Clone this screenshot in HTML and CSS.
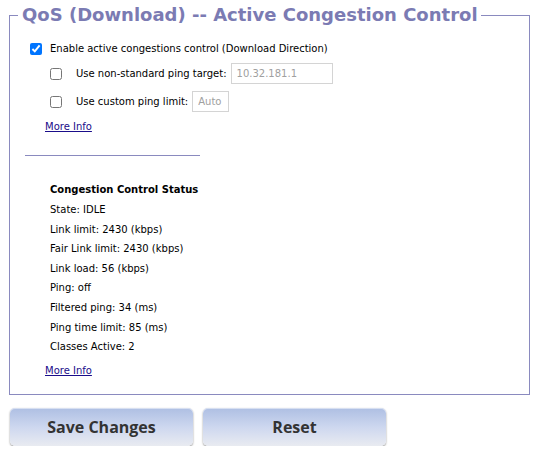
FILE: index.html
```html
<!DOCTYPE html>
<html>
<head>
<meta charset="utf-8">
<link rel="stylesheet" href="styles.css">
</head>
<body>
<fieldset class="box">
  <legend class="box-title">QoS (Download) -- Active Congestion Control</legend>
  <div class="row row-main">
    <input type="checkbox" class="cb" checked>
    <span>Enable active congestions control (Download Direction)</span>
  </div>
  <div class="row row-sub">
    <input type="checkbox" class="cb">
    <span class="lbl">Use non-standard ping target:</span>
    <input type="text" class="txt txt-wide" value="10.32.181.1" disabled>
  </div>
  <div class="row row-sub row-sub2">
    <input type="checkbox" class="cb">
    <span class="lbl">Use custom ping limit:</span>
    <input type="text" class="txt txt-narrow" value="Auto" disabled>
  </div>
  <a class="more" href="#">More Info</a>
  <div class="divider"></div>
  <div class="status">
    <div class="status-title">Congestion Control Status</div>
    <div class="status-line">State: IDLE</div>
    <div class="status-line">Link limit: 2430 (kbps)</div>
    <div class="status-line">Fair Link limit: 2430 (kbps)</div>
    <div class="status-line">Link load: 56 (kbps)</div>
    <div class="status-line">Ping: off</div>
    <div class="status-line">Filtered ping: 34 (ms)</div>
    <div class="status-line">Ping time limit: 85 (ms)</div>
    <div class="status-line">Classes Active: 2</div>
  </div>
  <a class="more more-bottom" href="#">More Info</a>
</fieldset>
<div class="buttons">
  <button class="btn">Save Changes</button>
  <button class="btn">Reset</button>
</div>
</body>
</html>
```

FILE: styles.css
```css
html, body {
  margin: 0;
  padding: 0;
  background: #ffffff;
}
body {
  font-family: "DejaVu Sans", Verdana, sans-serif;
  font-size: 10px;
  color: #000;
}
.box {
  margin: 2px 0 0 9px;
  width: 521px;
  box-sizing: border-box;
  border: 1px solid #8a8abf;
  padding: 0 0 14px 0;
  height: 393px;
}
.box-title {
  margin-left: 8px;
  padding: 0 3px 0 4px;
  font-size: 18px;
  font-weight: bold;
  color: #7b7bb3;
  line-height: 26px;
}
.row {
  display: flex;
  align-items: center;
  height: 21px;
}
.row-main {
  margin-top: 10px;
  padding-left: 20px;
}
.row-sub {
  margin-top: 4px;
  padding-left: 40px;
}
.row-sub2 {
  margin-top: 7px;
}
.cb {
  margin: 0 8px 0 0;
  width: 12px;
  height: 12px;
}
.row-sub .cb {
  margin-right: 14px;
}
.lbl {
  margin-right: 4px;
}
.txt {
  font-family: "DejaVu Sans", Verdana, sans-serif;
  font-size: 10px;
  height: 21px;
  box-sizing: border-box;
  border: 1px solid #d4d4d4;
  background: #fff;
  color: #a0a0a0;
  padding: 0 5px;
}
.txt-wide { width: 102px; }
.txt-narrow { width: 37px; }
.more {
  display: block;
  margin: 9px 0 0 35px;
  color: #1a0d8a;
  width: max-content;
}
.divider {
  margin: 23px 0 0 15px;
  width: 175px;
  border-top: 1px solid #8a8abf;
}
.status {
  margin: 28px 0 0 40px;
}
.status-title {
  font-weight: bold;
  height: 20px;
}
.status-line {
  height: 19.6px;
}
.more-bottom {
  margin-top: 4px;
}
.buttons {
  display: flex;
  gap: 10px;
  margin: 13px 0 0 10px;
}
.btn {
  width: 183px;
  height: 38px;
  border: none;
  border-radius: 5px;
  background: linear-gradient(#aebfe3, #cdd7ef 50%, #e9ebf1);
  box-shadow: 0 1px 2px rgba(0,0,0,0.45), inset 0 1px 0 rgba(255,255,255,0.5);
  font-family: "Open Sans", "DejaVu Sans", sans-serif;
  font-weight: bold;
  font-size: 16px;
  color: #333;
  padding: 0;
}
```
